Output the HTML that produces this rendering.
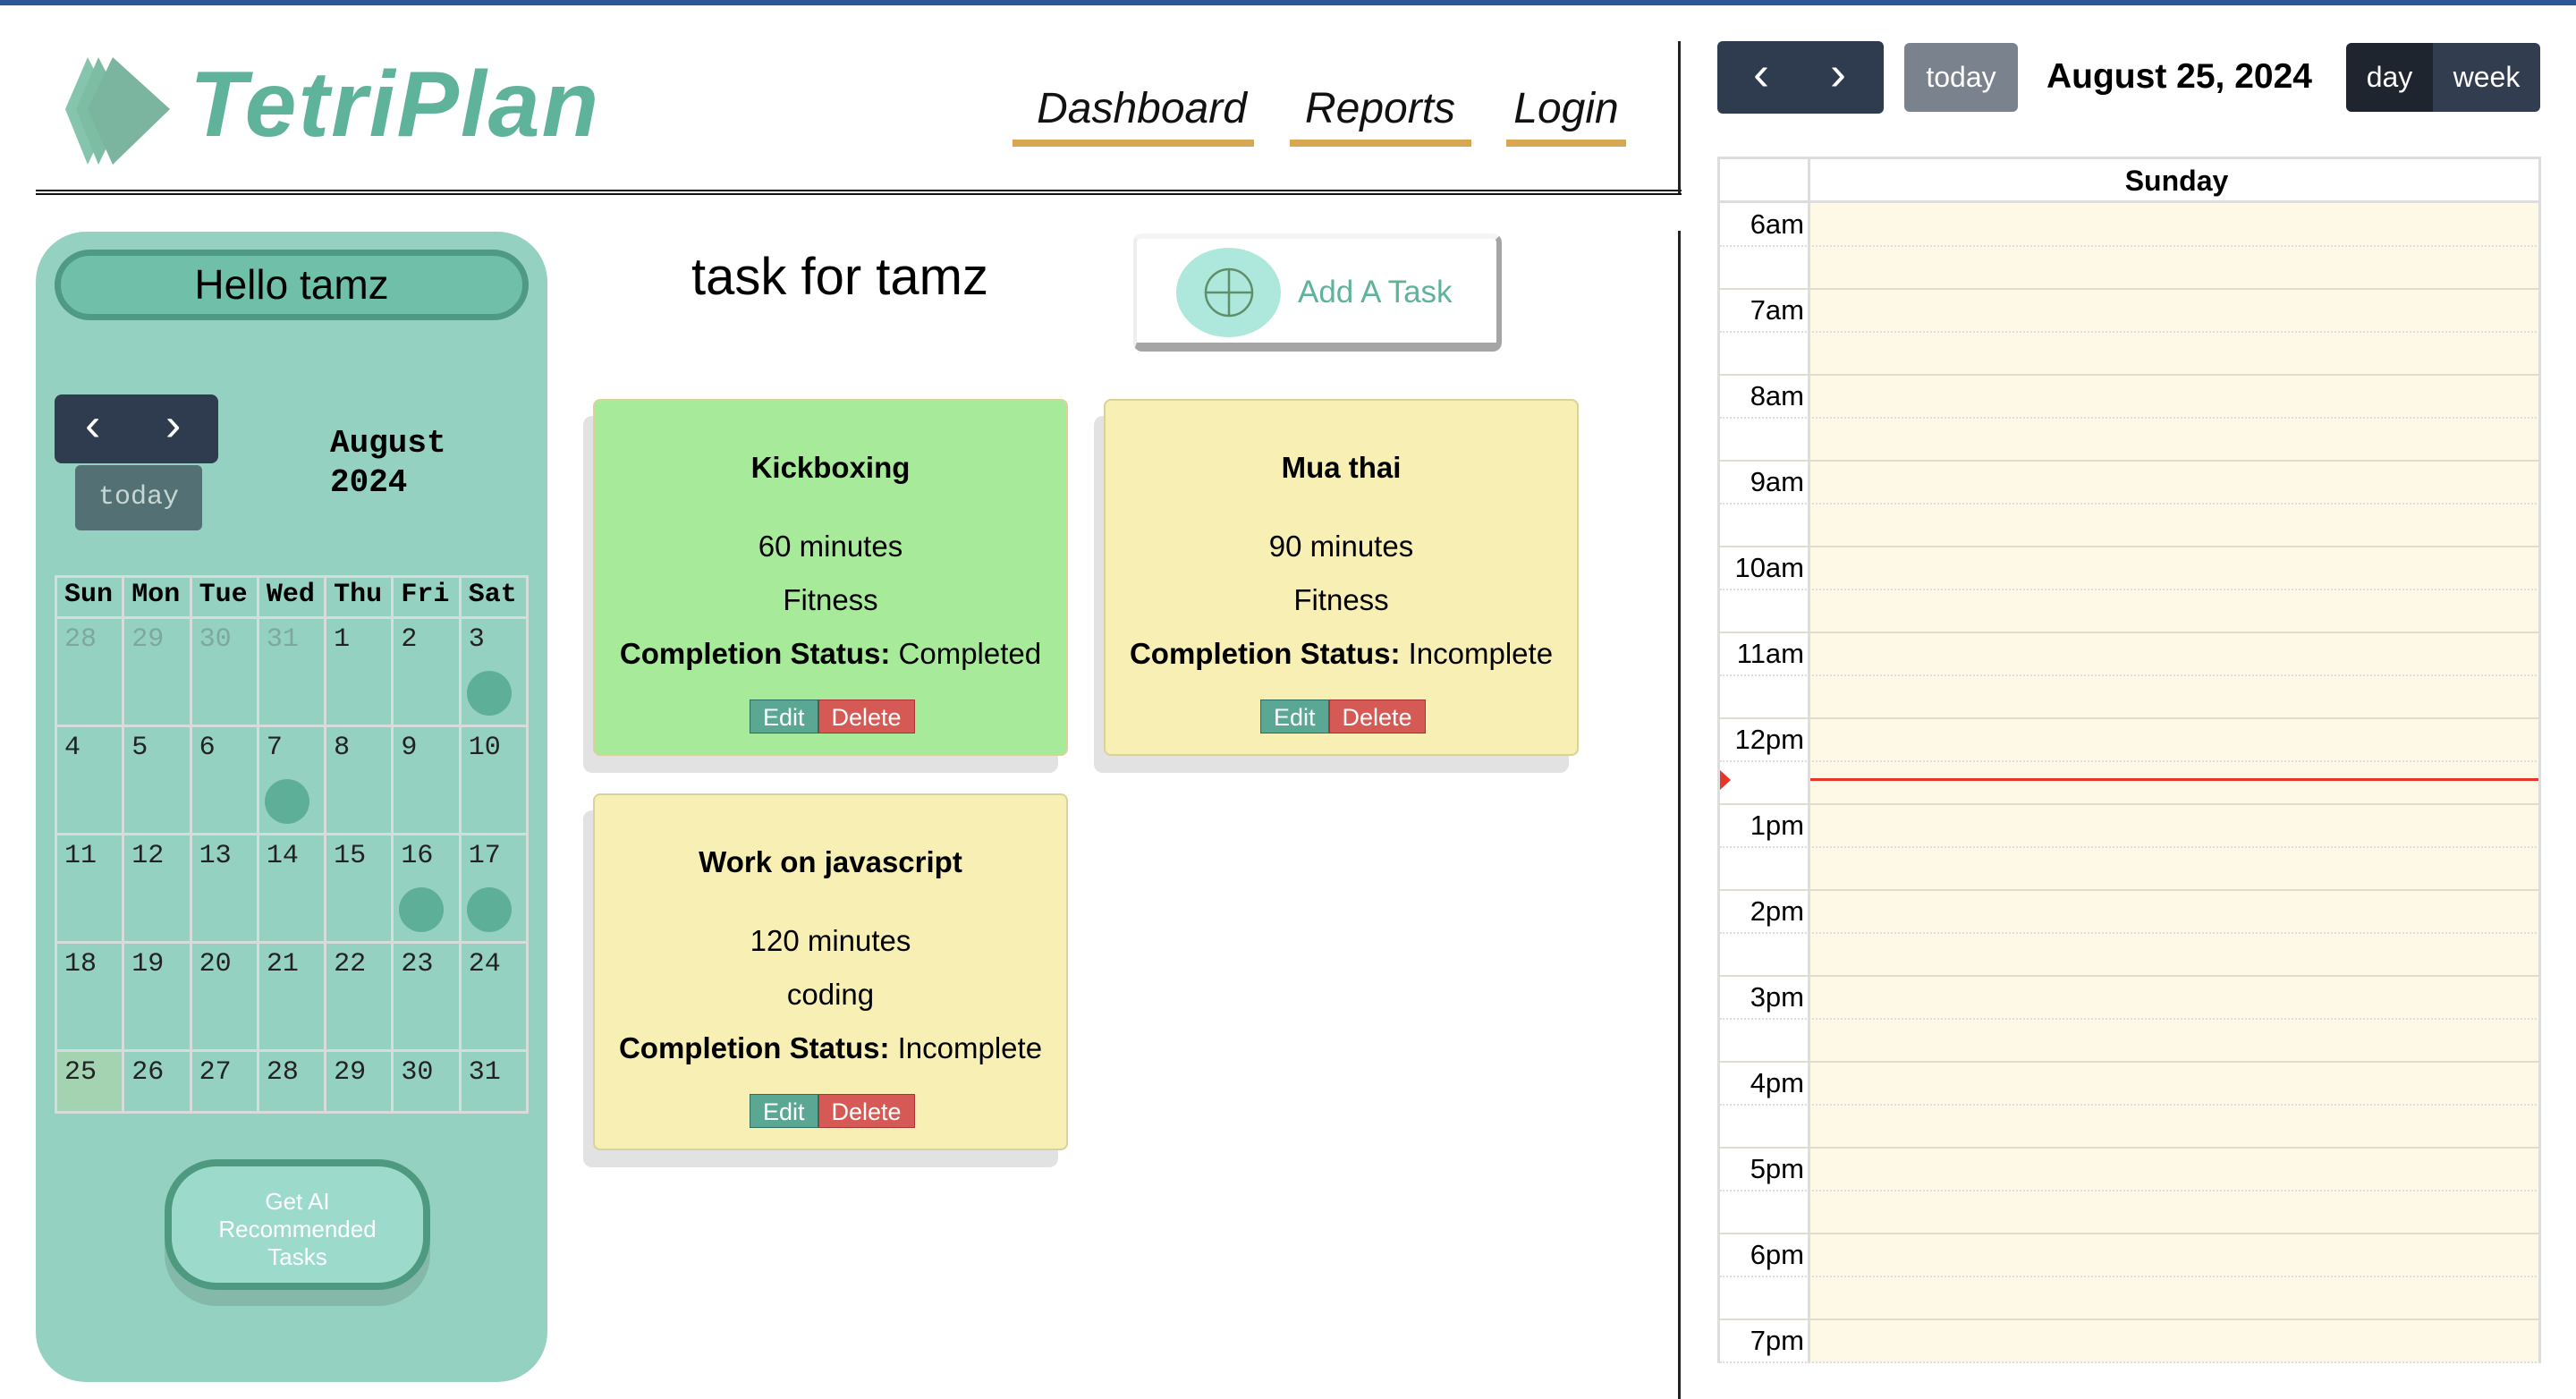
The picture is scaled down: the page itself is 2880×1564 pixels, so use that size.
<!DOCTYPE html>
<html><head><meta charset="utf-8"><style>
*{box-sizing:border-box;margin:0;padding:0}
body{width:2880px;height:1564px;overflow:hidden;background:#fff;font-family:"Liberation Sans",sans-serif;position:relative}
.a{position:absolute}
.topbar{left:0;top:0;width:2880px;height:6px;background:#2b5797}
.nav{font-family:"Liberation Sans",sans-serif;font-size:48px;color:#111;text-align:center;font-style:italic}
.ul{height:8px;background:#d9a752}
.side{left:40px;top:259px;width:572px;height:1286px;background:#95d1c1;border-radius:56px}
.hello{left:61px;top:279px;width:530px;height:79px;background:#70bfa9;border:7px solid #4f9a84;border-radius:40px;font-size:46px;text-align:center;line-height:64px;color:#000}
.cal{left:61px;top:643px;border-collapse:collapse;font-family:"Liberation Mono",monospace;table-layout:fixed;width:530px}
.cal td,.cal th{border:3px solid #d6dcd9;vertical-align:top;text-align:left;padding:6px 8px;font-size:30px;position:relative}
.cal th{height:46px;font-weight:bold;font-size:30px;padding:2px 8px;color:#000}
.cal td{height:121px;color:#222}
.cal tr.last td{height:69px}
.cal td.g{color:#7ea89c}
.dot{position:absolute;left:6px;bottom:10px;width:50px;height:50px;border-radius:50%;background:#5daf98}
.card{width:531px;height:399px;border:2px solid #d9d29a;border-radius:8px;text-align:center;font-size:33px;color:#000}
.card p{position:absolute;left:0;width:100%}
.sh{width:531px;height:399px;background:#e2e2e2;border-radius:10px}
.btns{position:absolute;left:173px;top:334px;font-size:27px;color:#fff}
.btns span{display:inline-block;height:38px;line-height:38px;padding:0 14px;border:1px solid #2c6f5e}
.hr{position:absolute;left:0;width:921px;height:1px;border-top:2px solid #e2dccc}
.hh{position:absolute;left:0;width:921px;border-top:2px dotted #ddd}
.lbl{position:absolute;left:0;width:94px;text-align:right;font-size:31px;color:#000}
</style></head><body>
<div class="a topbar"></div>
<svg class="a" style="left:68px;top:62px" width="130" height="125" viewBox="0 0 130 125">
<polygon points="30,2 5,60 30,122 60,60" fill="#86c5ad"/>
<polygon points="42,2 17,60 42,122 72,60" fill="#7cbda4"/>
<polygon points="58,2 30,60 58,122 122,60" fill="#7bb49f"/>
</svg>
<div class="a" style="left:212px;top:58px;font-size:104px;color:#5fb39b;font-weight:bold;font-style:italic;letter-spacing:2px">TetriPlan</div>
<div class="a nav" style="left:1152px;top:94px;width:249px">Dashboard</div>
<div class="a ul" style="left:1132px;top:156px;width:270px"></div>
<div class="a nav" style="left:1442px;top:94px;width:202px">Reports</div>
<div class="a ul" style="left:1442px;top:156px;width:203px"></div>
<div class="a nav" style="left:1684px;top:94px;width:134px">Login</div>
<div class="a ul" style="left:1684px;top:156px;width:134px"></div>
<div class="a" style="left:40px;top:212px;width:1840px;height:6px;border-top:2px solid #111;border-bottom:2px solid #111"></div>
<div class="a" style="left:1876px;top:46px;width:3px;height:170px;background:#222"></div>
<div class="a" style="left:1876px;top:258px;width:3px;height:1306px;background:#222"></div>

<div class="a side"></div>
<div class="a hello">Hello tamz</div>
<div class="a" style="left:61px;top:441px;width:183px;height:77px;background:#2f3c4f;border-radius:8px;color:#fff;font-size:52px;line-height:77px">
<span class="a" style="left:34px;top:-4px">&#x2039;</span><span class="a" style="left:124px;top:-4px">&#x203A;</span></div>
<div class="a" style="left:84px;top:520px;width:142px;height:73px;background:#537074;border-radius:6px;color:#c6d6d2;font-family:'Liberation Mono',monospace;font-size:30px;text-align:center;line-height:73px">today</div>
<div class="a" style="left:369px;top:474px;font-family:'Liberation Mono',monospace;font-weight:bold;font-size:36px;line-height:44px;color:#000">August<br>2024</div>
<table class="a cal">
<tr><th>Sun</th><th>Mon</th><th>Tue</th><th>Wed</th><th>Thu</th><th>Fri</th><th>Sat</th></tr>
<tr><td class="g">28</td><td class="g">29</td><td class="g">30</td><td class="g">31</td><td>1</td><td>2</td><td>3<div class="dot"></div></td></tr>
<tr><td>4</td><td>5</td><td>6</td><td>7<div class="dot"></div></td><td>8</td><td>9</td><td>10</td></tr>
<tr><td>11</td><td>12</td><td>13</td><td>14</td><td>15</td><td>16<div class="dot"></div></td><td>17<div class="dot"></div></td></tr>
<tr><td>18</td><td>19</td><td>20</td><td>21</td><td>22</td><td>23</td><td>24</td></tr>
<tr class="last"><td style="background:#a3d3b0">25</td><td>26</td><td>27</td><td>28</td><td>29</td><td>30</td><td>31</td></tr>
</table>
<div class="a" style="left:184px;top:1310px;width:297px;height:150px;background:#84b9aa;border-radius:58px"></div>
<div class="a" style="left:184px;top:1296px;width:297px;height:146px;background:#9cdbcb;border:8px solid #4e9a80;border-radius:58px;color:#fff;font-size:26px;text-align:center;padding-top:24px;line-height:31px">Get AI<br>Recommended<br>Tasks</div>

<div class="a" style="left:773px;top:276px;font-size:58px;color:#000">task for tamz</div>
<div class="a" style="left:1267px;top:261px;width:412px;height:132px;background:#fff;border-left:4px solid #eee;border-top:6px solid #f4f4f4;border-right:6px solid #a5a5a5;border-bottom:10px solid #a5a5a5;border-radius:10px"></div>
<div class="a" style="left:1315px;top:277px;width:117px;height:100px;border-radius:50%;background:#aee8dc"></div>
<svg class="a" style="left:1345px;top:298px" width="58" height="58" viewBox="0 0 58 58"><circle cx="29" cy="29" r="26" fill="none" stroke="#5f8f6a" stroke-width="2.5"/><path d="M29 3V55M3 29H55" stroke="#5f8f6a" stroke-width="2.5"/></svg>
<div class="a" style="left:1451px;top:307px;font-size:35px;color:#5fb39b">Add A Task</div>

<div class="a sh" style="left:652px;top:465px"></div>
<div class="a card" style="left:663px;top:446px;background:#a7eb9a">
<p style="top:56px;font-weight:bold">Kickboxing</p><p style="top:144px">60 minutes</p><p style="top:204px">Fitness</p><p style="top:264px"><b>Completion Status:</b> Completed</p>
<div class="btns"><span style="background:#5aa793">Edit</span><span style="background:#d55a56;border-color:#a33">Delete</span></div></div>
<div class="a sh" style="left:1223px;top:465px"></div>
<div class="a card" style="left:1234px;top:446px;background:#f7efb3">
<p style="top:56px;font-weight:bold">Mua thai</p><p style="top:144px">90 minutes</p><p style="top:204px">Fitness</p><p style="top:264px"><b>Completion Status:</b> Incomplete</p>
<div class="btns"><span style="background:#5aa793">Edit</span><span style="background:#d55a56;border-color:#a33">Delete</span></div></div>
<div class="a sh" style="left:652px;top:906px"></div>
<div class="a card" style="left:663px;top:887px;background:#f7efb3">
<p style="top:56px;font-weight:bold">Work on javascript</p><p style="top:144px">120 minutes</p><p style="top:204px">coding</p><p style="top:264px"><b>Completion Status:</b> Incomplete</p>
<div class="btns"><span style="background:#5aa793">Edit</span><span style="background:#d55a56;border-color:#a33">Delete</span></div></div>

<div class="a" style="left:1920px;top:46px;width:186px;height:81px;background:#2f3c4f;border-radius:6px;color:#fff;font-size:54px;line-height:81px">
<span class="a" style="left:40px;top:-4px">&#x2039;</span><span class="a" style="left:126px;top:-4px">&#x203A;</span></div>
<div class="a" style="left:2129px;top:48px;width:127px;height:77px;background:#7a828e;border-radius:6px;color:#fff;font-size:32px;text-align:center;line-height:77px">today</div>
<div class="a" style="left:2288px;top:64px;font-size:39px;font-weight:bold;color:#000">August 25, 2024</div>
<div class="a" style="left:2623px;top:48px;width:97px;height:77px;background:#1e252e;border-radius:6px 0 0 6px;color:#fff;font-size:32px;text-align:center;line-height:77px">day</div>
<div class="a" style="left:2720px;top:48px;width:120px;height:77px;background:#323e4f;border-radius:0 6px 6px 0;color:#fff;font-size:32px;text-align:center;line-height:77px">week</div>

<div class="a" style="left:1920px;top:175px;width:921px;height:1349px;border:3px solid #ddd;border-bottom:none;overflow:hidden">
<div class="a" style="left:98px;top:0;width:3px;height:1400px;background:#ddd"></div>
<div class="a" style="left:0;top:6px;width:921px;text-align:center;font-weight:bold;font-size:32px;padding-left:100px">Sunday</div>
<div class="a" style="left:0;top:46px;width:921px;height:3px;background:#ddd"></div>
<div class="a" style="left:101px;top:49px;width:820px;height:1400px;background:#fef8e6"></div>
<div class="a" style="left:0;top:49px;width:921px;height:1400px">
<div class="lbl" style="top:6px">6am</div><div class="hh" style="top:47px"></div>
<div class="hr" style="top:95px"></div><div class="lbl" style="top:102px">7am</div><div class="hh" style="top:143px"></div>
<div class="hr" style="top:191px"></div><div class="lbl" style="top:198px">8am</div><div class="hh" style="top:239px"></div>
<div class="hr" style="top:287px"></div><div class="lbl" style="top:294px">9am</div><div class="hh" style="top:335px"></div>
<div class="hr" style="top:383px"></div><div class="lbl" style="top:390px">10am</div><div class="hh" style="top:431px"></div>
<div class="hr" style="top:479px"></div><div class="lbl" style="top:486px">11am</div><div class="hh" style="top:527px"></div>
<div class="hr" style="top:575px"></div><div class="lbl" style="top:582px">12pm</div><div class="hh" style="top:623px"></div>
<div class="hr" style="top:671px"></div><div class="lbl" style="top:678px">1pm</div><div class="hh" style="top:719px"></div>
<div class="hr" style="top:767px"></div><div class="lbl" style="top:774px">2pm</div><div class="hh" style="top:815px"></div>
<div class="hr" style="top:863px"></div><div class="lbl" style="top:870px">3pm</div><div class="hh" style="top:911px"></div>
<div class="hr" style="top:959px"></div><div class="lbl" style="top:966px">4pm</div><div class="hh" style="top:1007px"></div>
<div class="hr" style="top:1055px"></div><div class="lbl" style="top:1062px">5pm</div><div class="hh" style="top:1103px"></div>
<div class="hr" style="top:1151px"></div><div class="lbl" style="top:1158px">6pm</div><div class="hh" style="top:1199px"></div>
<div class="hr" style="top:1247px"></div><div class="lbl" style="top:1254px">7pm</div><div class="hh" style="top:1295px"></div>
<div class="a" style="left:101px;top:643px;width:820px;height:3px;background:#e8352a"></div>
<div class="a" style="left:0;top:634px;width:0;height:0;border-top:11px solid transparent;border-bottom:11px solid transparent;border-left:12px solid #e8352a"></div>
</div>
</div>
</body></html>
